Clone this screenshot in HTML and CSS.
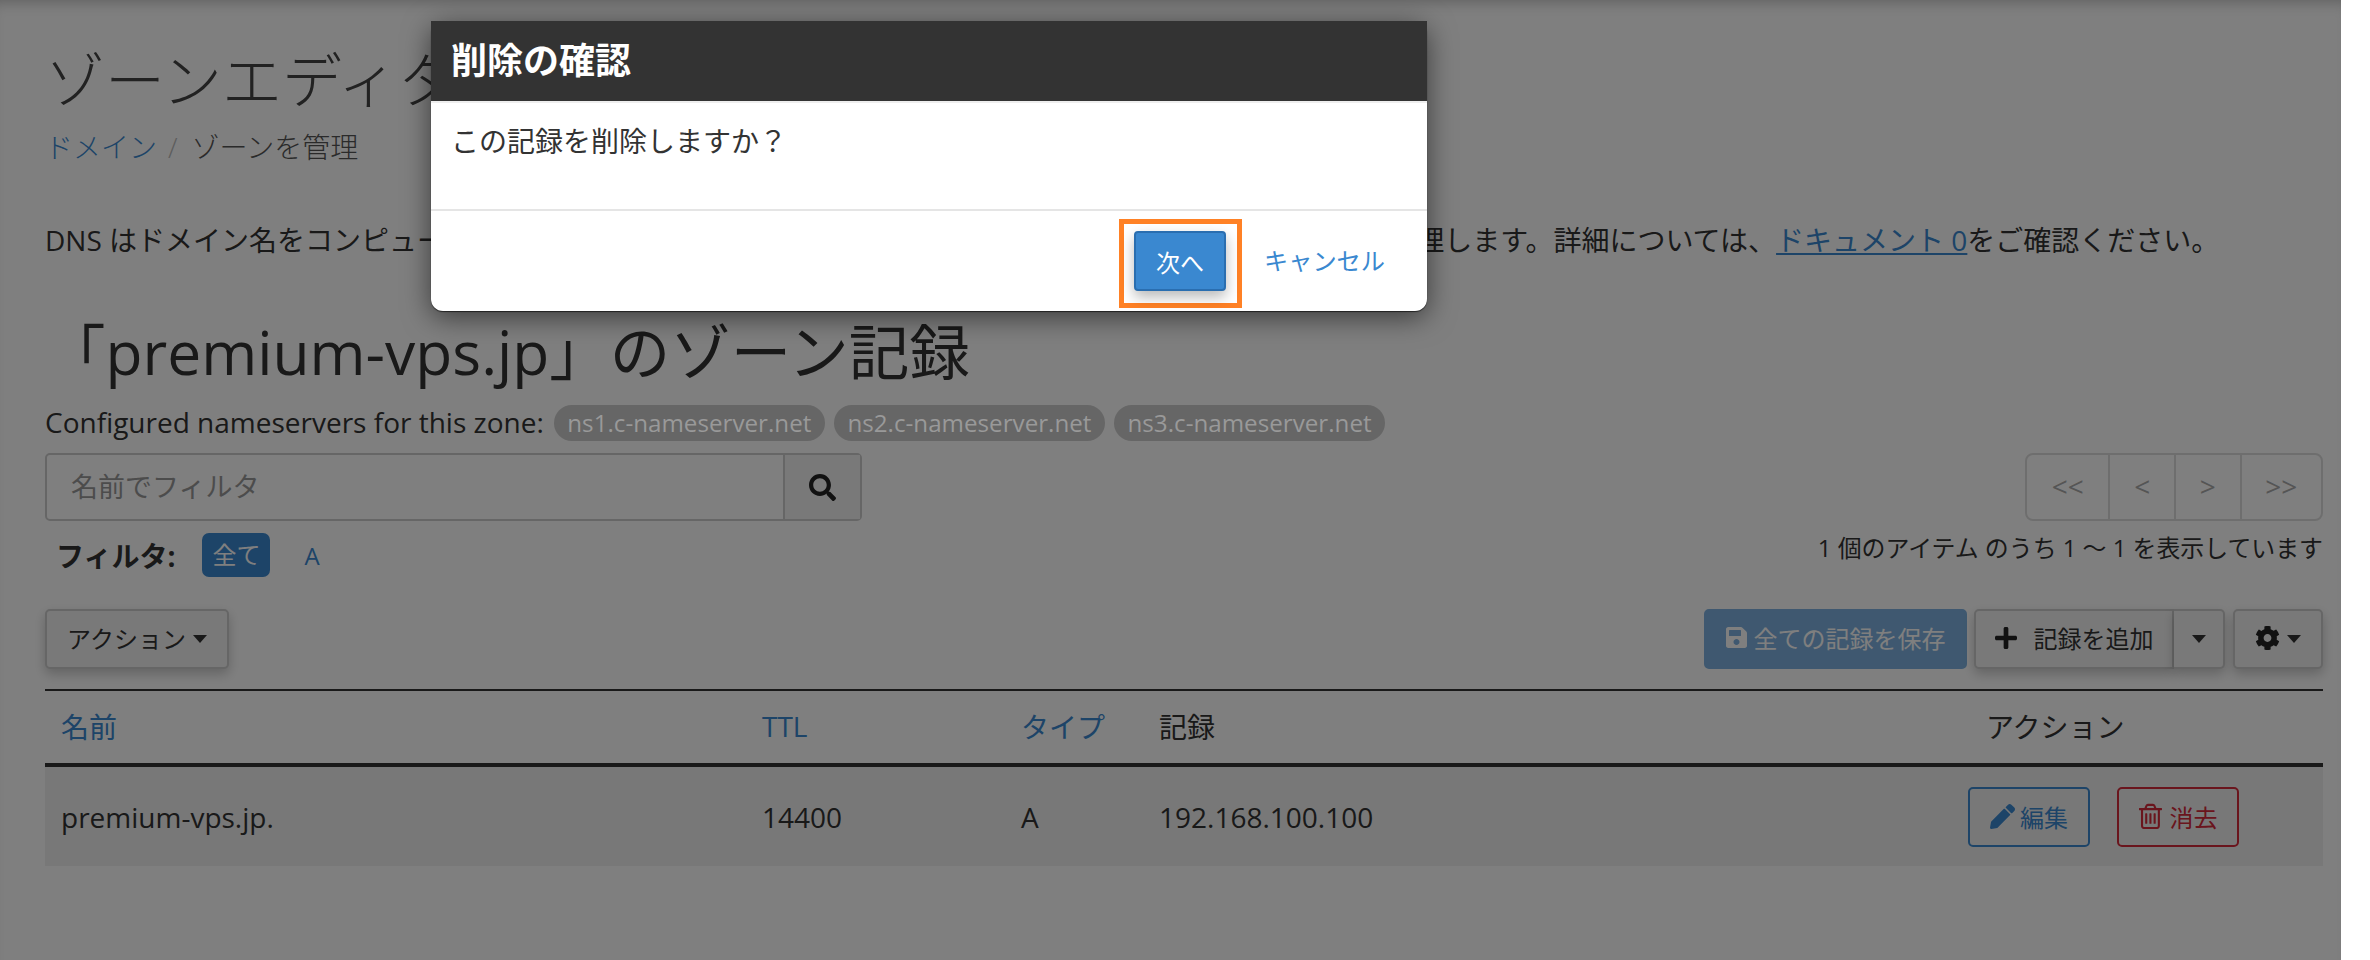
FILE: index.html
```html
<!DOCTYPE html>
<html lang="ja">
<head>
<meta charset="utf-8">
<title>ゾーンエディタ</title>
<link rel="stylesheet" href="styles.css">
</head>
<body>
<div class="page">
  <h1 class="title">ゾーンエディタ</h1>
  <nav class="crumbs"><a href="#">ドメイン</a><span class="sep">/</span><span class="here">ゾーンを管理</span></nav>
  <p class="desc">DNS はドメイン名をコンピューターの IP アドレスに変換します。このインターフェースでは DNS ゾーンを管理します。詳細については、<a href="#">ドキュメント 0</a>をご確認ください。</p>
  <h2 class="zone">「premium-vps.jp」のゾーン記録</h2>
  <div class="ns-row">
    <span class="ns-label">Configured nameservers for this zone:</span>
    <span class="pill">ns1.c-nameserver.net</span>
    <span class="pill">ns2.c-nameserver.net</span>
    <span class="pill">ns3.c-nameserver.net</span>
  </div>
  <div class="search-row">
    <div class="search">
      <span class="search-input">名前でフィルタ</span>
      <span class="search-btn"><svg class="ic-search" viewBox="0 0 512 512"><path d="M505 442.7L405.3 343c-4.5-4.5-10.6-7-17-7H372c27.6-35.3 44-79.7 44-128C416 93.1 322.9 0 208 0S0 93.1 0 208s93.1 208 208 208c48.3 0 92.7-16.4 128-44v16.3c0 6.4 2.5 12.5 7 17l99.7 99.7c9.4 9.4 24.6 9.4 33.9 0l28.3-28.3c9.4-9.4 9.4-24.6.1-34zM208 336c-70.7 0-128-57.2-128-128 0-70.7 57.2-128 128-128 70.7 0 128 57.2 128 128 0 70.7-57.2 128-128 128z"/></svg></span>
    </div>
    <div class="pager"><span class="pg pg-wide">&lt;&lt;</span><span class="pg">&lt;</span><span class="pg">&gt;</span><span class="pg pg-wide">&gt;&gt;</span></div>
  </div>
  <div class="filter-row">
    <div class="filters"><b class="filter-label">フィルタ:</b><span class="chip">全て</span><a class="chip-link" href="#">A</a></div>
    <div class="count">1 個のアイテム のうち 1 ～ 1 を表示しています</div>
  </div>
  <div class="toolbar">
    <button class="btn btn-action">アクション<i class="caret"></i></button>
    <div class="tools">
      <button class="btn btn-save"><svg class="ic-save" viewBox="0 0 448 512"><path d="M433.941 129.941l-83.882-83.882A48 48 0 0 0 316.118 32H48C21.49 32 0 53.49 0 80v352c0 26.51 21.49 48 48 48h352c26.51 0 48-21.49 48-48V163.882a48 48 0 0 0-14.059-33.941zM224 416c-35.346 0-64-28.654-64-64 0-35.346 28.654-64 64-64s64 28.654 64 64c0 35.346-28.654 64-64 64zm96-304.52V212c0 6.627-5.373 12-12 12H76c-6.627 0-12-5.373-12-12V108c0-6.627 5.373-12 12-12h228.52c3.183 0 6.235 1.264 8.485 3.515l3.48 3.48A11.996 11.996 0 0 1 320 111.48z"/></svg>全ての記録を保存</button>
      <div class="split">
        <button class="btn split-main"><svg class="ic-plus" viewBox="0 0 448 512"><path d="M416 208H272V64c0-17.67-14.33-32-32-32h-32c-17.67 0-32 14.33-32 32v144H32c-17.67 0-32 14.33-32 32v32c0 17.67 14.33 32 32 32h144v144c0 17.67 14.33 32 32 32h32c17.67 0 32-14.33 32-32V304h144c17.67 0 32-14.33 32-32v-32c0-17.67-14.33-32-32-32z"/></svg>記録を追加</button>
        <button class="btn split-caret"><i class="caret"></i></button>
      </div>
      <button class="btn btn-gear"><svg class="ic-cog" viewBox="0 0 512 512"><path d="M487.4 315.7l-42.6-24.6c4.3-23.2 4.3-47 0-70.2l42.6-24.6c4.9-2.8 7.1-8.6 5.5-14-11.1-35.6-30-67.8-54.7-94.6-3.8-4.1-10-5.1-14.8-2.3L380.8 110c-17.9-15.4-38.5-27.3-60.8-35.1V25.8c0-5.6-3.9-10.5-9.4-11.7-36.7-8.2-74.3-7.8-109.2 0-5.5 1.2-9.4 6.1-9.4 11.7V75c-22.2 7.9-42.8 19.8-60.8 35.1L88.7 85.5c-4.9-2.8-11-1.9-14.8 2.3-24.7 26.7-43.6 58.9-54.7 94.6-1.7 5.4.6 11.2 5.5 14L67.3 221c-4.3 23.2-4.3 47 0 70.2l-42.6 24.6c-4.9 2.8-7.1 8.6-5.5 14 11.1 35.6 30 67.8 54.7 94.6 3.8 4.1 10 5.1 14.8 2.3l42.6-24.6c17.9 15.4 38.5 27.3 60.8 35.1v49.2c0 5.6 3.9 10.5 9.4 11.7 36.7 8.2 74.3 7.8 109.2 0 5.5-1.2 9.4-6.1 9.4-11.7v-49.2c22.2-7.9 42.8-19.8 60.8-35.1l42.6 24.6c4.9 2.8 11 1.9 14.8-2.3 24.7-26.7 43.6-58.9 54.7-94.6 1.5-5.5-.7-11.3-5.6-14.1zM256 336c-44.1 0-80-35.9-80-80s35.9-80 80-80 80 35.9 80 80-35.9 80-80 80z"/></svg><i class="caret"></i></button>
    </div>
  </div>
  <table class="records">
    <colgroup><col class="c-name"><col class="c-ttl"><col class="c-type"><col class="c-rec"><col class="c-act"></colgroup>
    <thead>
      <tr><th><a href="#">名前</a></th><th><a href="#">TTL</a></th><th><a href="#">タイプ</a></th><th>記録</th><th class="th-act">アクション</th></tr>
    </thead>
    <tbody>
      <tr>
        <td>premium-vps.jp.</td><td>14400</td><td>A</td><td>192.168.100.100</td>
        <td class="td-act">
          <button class="btn-line line-blue"><svg class="ic-pencil" viewBox="0 0 512 512"><path d="M497.9 142.1l-46.1 46.1c-4.7 4.7-12.3 4.7-17 0l-111-111c-4.7-4.7-4.7-12.3 0-17l46.1-46.1c18.7-18.7 49.1-18.7 67.9 0l60.1 60.1c18.8 18.7 18.8 49.1 0 67.9zM284.2 99.8L21.6 362.4.4 483.9c-2.9 16.4 11.4 30.6 27.8 27.8l121.5-21.3 262.6-262.6c4.7-4.7 4.7-12.3 0-17l-111-111c-4.8-4.7-12.4-4.7-17.1 0z"/></svg>編集</button>
          <button class="btn-line line-red"><svg class="ic-trash" viewBox="200 100 1400 1600"><path d="M704 736v576q0 14-9 23t-23 9h-64q-14 0-23-9t-9-23v-576q0-14 9-23t23-9h64q14 0 23 9t9 23zm256 0v576q0 14-9 23t-23 9h-64q-14 0-23-9t-9-23v-576q0-14 9-23t23-9h64q14 0 23 9t9 23zm256 0v576q0 14-9 23t-23 9h-64q-14 0-23-9t-9-23v-576q0-14 9-23t23-9h64q14 0 23 9t9 23zm128 724v-948h-896v948q0 22 7 40.5t14.5 27 10.5 8.5h832q3 0 10.5-8.5t14.5-27 7-40.5zm-672-1076h448l-48-117q-7-9-17-11h-317q-10 2-17 11zm928 32v64q0 14-9 23t-23 9h-96v948q0 83-47 143.5t-113 60.5h-832q-66 0-113-58.5t-47-141.5v-952h-96q-14 0-23-9t-9-23v-64q0-14 9-23t23-9h309l70-167q15-37 54-63t79-26h320q40 0 79 26t54 63l70 167h309q14 0 23 9t9 23z"/></svg>消去</button>
        </td>
      </tr>
    </tbody>
  </table>
  <div class="backdrop"></div>
  <div class="modal">
    <div class="modal-head">削除の確認</div>
    <div class="modal-body">この記録を削除しますか？</div>
    <div class="modal-foot">
      <div class="focus-box"><button class="btn-next">次へ</button></div>
      <a class="cancel" href="#">キャンセル</a>
    </div>
  </div>
</div>
</body>
</html>
```
FILE: styles.css
```css
* { box-sizing: border-box; }
html, body { margin: 0; height: 100%; background: #fff; overflow: hidden; }
body { font-family: "Open Sans", "Noto Sans CJK JP", sans-serif; color: #333; font-size: 24px; }
a { color: #3a88d0; text-decoration: none; }
button { font-family: inherit; cursor: pointer; }

.page { position: relative; width: 2341px; height: 960px; padding: 40px 18px 0 45px; background: #fff; }

.title { margin: 0; height: 80px; font-size: 60px; line-height: 80px; font-weight: 300; color: #444; }
.crumbs { margin-top: 7px; height: 40px; font-size: 28px; line-height: 40px; font-weight: 300; display: flex; }
.sep { margin: 0 14px 0 11px; color: #bbb; }
.here { color: #555; }
.desc { margin: 53px 0 0; height: 40px; font-size: 28px; line-height: 40px; white-space: nowrap; }
.desc a { text-decoration: underline; }
.zone { margin: 52px 0 0; height: 80px; font-size: 60.5px; line-height: 80px; font-weight: 400; color: #333; }

.ns-row { margin-top: 13px; height: 36px; display: flex; align-items: center; gap: 9px; }
.ns-label { font-size: 28px; line-height: 36px; padding-bottom: 2px; margin-right: 1px; white-space: nowrap; }
.pill { position: relative; z-index: 1; height: 36px; line-height: 36px; padding: 0 13.5px; border-radius: 18px; background: #666; color: #999; font-size: 24.2px; white-space: nowrap; }

.search-row { margin-top: 12px; display: flex; justify-content: space-between; }
.search { width: 817px; height: 68px; display: flex; border: 2px solid #ccc; border-radius: 5px; }
.search-input { flex: 1; padding-left: 24px; line-height: 64px; font-size: 27px; color: #999; }
.search-btn { width: 77px; border-left: 2px solid #ccc; background: #f3f3f3; display: flex; align-items: center; justify-content: center; }
.ic-search { width: 27px; height: 27px; fill: #222; }
.pager { width: 298px; height: 68px; display: flex; border: 2px solid #ddd; border-radius: 8px; color: #aaa; font-size: 28px; }
.pg { width: 66px; line-height: 62px; text-align: center; border-left: 2px solid #ddd; }
.pg:first-child { border-left: 0; }
.pg-wide { width: 82px; }

.filter-row { margin-top: 12px; display: flex; justify-content: space-between; align-items: flex-start; }
.filters { height: 44px; display: flex; align-items: center; padding-left: 11px; }
.filter-label { font-size: 28px; font-weight: 700; margin-right: 27px; }
.chip { width: 68px; height: 44px; line-height: 44px; text-align: center; background: #3a88d0; color: #fff; border-radius: 7px; font-size: 24px; }
.chip-link { margin-left: 34px; font-size: 24px; }
.count { font-size: 23.9px; line-height: 30px; }

.toolbar { margin-top: 32px; height: 60px; display: flex; justify-content: space-between; }
.tools { display: flex; gap: 7px; }
.btn { height: 60px; border: 2px solid #ccc; border-radius: 5px; background: #f3f3f3; color: #333; font-size: 24px; padding: 0 0 3px; display: flex; align-items: center; justify-content: center; box-shadow: 0 5px 12px rgba(0,0,0,.22); }
.btn-action { width: 184px; }
.caret { display: inline-block; width: 0; height: 0; margin: 3px 0 0 7px; border-left: 7.5px solid transparent; border-right: 7.5px solid transparent; border-top: 8px solid #333; }
.btn-save { width: 263px; background: #3a88d0; border-color: #3a88d0; color: #fff; opacity: .65; box-shadow: none; }
.ic-save { width: 21px; height: 27px; margin-right: 7px; fill: #fff; }
.split { display: flex; border-radius: 5px; margin-right: 1px; }
.split-main { width: 200px; border-radius: 5px 0 0 5px; }
.split-caret { width: 51px; border-left: 0; border-radius: 0 5px 5px 0; }
.split-caret .caret { margin-left: 0; }
.ic-plus { width: 22px; height: 26px; margin-right: 17px; fill: #222; }
.btn-gear { width: 90px; }
.ic-cog { width: 25px; height: 28px; fill: #222; }

.records { margin-top: 20px; width: 2278px; border-collapse: collapse; table-layout: fixed; border-top: 2px solid #333; }
.c-name { width: 701px; }
.c-ttl { width: 259px; }
.c-type { width: 138px; }
.c-rec { width: 825px; }
.c-act { width: 355px; }
.records th { height: 75px; padding: 0 0 2px 16px; text-align: left; font-weight: 400; font-size: 28px; border-bottom: 4px solid #333; }
.records td { height: 101px; padding: 0 0 0 16px; font-size: 28px; background: #f1f1f1; }
.records .th-act { padding-left: 18px; }
.records .td-act { padding-left: 0; font-size: 0; }
.btn-line { width: 122px; height: 60px; background: transparent; border: 2px solid; border-radius: 5px; font-size: 24px; padding: 0; display: inline-flex; align-items: center; justify-content: center; vertical-align: middle; }
.line-blue { color: #3a88d0; border-color: #3a88d0; margin-right: 27px; }
.line-red { color: #d42a3a; border-color: #d42a3a; }
.ic-pencil { width: 25px; height: 25px; margin-right: 5px; fill: #3a88d0; }
.ic-trash { width: 23px; height: 27px; margin-right: 8px; fill: #d42a3a; }

.backdrop { position: absolute; inset: 0; background: rgba(0,0,0,.5); box-shadow: inset 0 12px 14px -10px rgba(0,0,0,.25); }

.modal { position: absolute; z-index: 2; left: 431px; top: 21px; width: 996px; height: 290px; background: #fff; border-radius: 12px; box-shadow: 0 6px 28px rgba(0,0,0,.55), 0 1px 1px rgba(0,0,0,.6); display: flex; flex-direction: column; }
.modal-head { height: 80px; flex: none; padding-left: 20px; background: #333; color: #fff; font-size: 36px; line-height: 80px; font-weight: 700; }
.modal-body { height: 110px; flex: none; border-top: 2px solid #eee; border-bottom: 2px solid #e5e5e5; padding: 20px 0 0 20px; font-size: 28px; line-height: 36px; color: #333; }
.modal-foot { flex: 1; display: flex; align-items: flex-start; justify-content: flex-end; padding: 8px 42px 0 0; }
.focus-box { width: 123px; height: 89px; border: 5px solid #ff8125; padding: 7px 0 0 10px; }
.btn-next { width: 92px; height: 60px; padding: 0; background: #3a88d0; border: 2px solid #2a6eb0; border-radius: 4px; color: #fff; font-size: 24px; box-shadow: 0 6px 14px rgba(0,0,0,.28); display: block; }
.cancel { margin-left: 22px; font-size: 24.2px; line-height: 84px; }
```
